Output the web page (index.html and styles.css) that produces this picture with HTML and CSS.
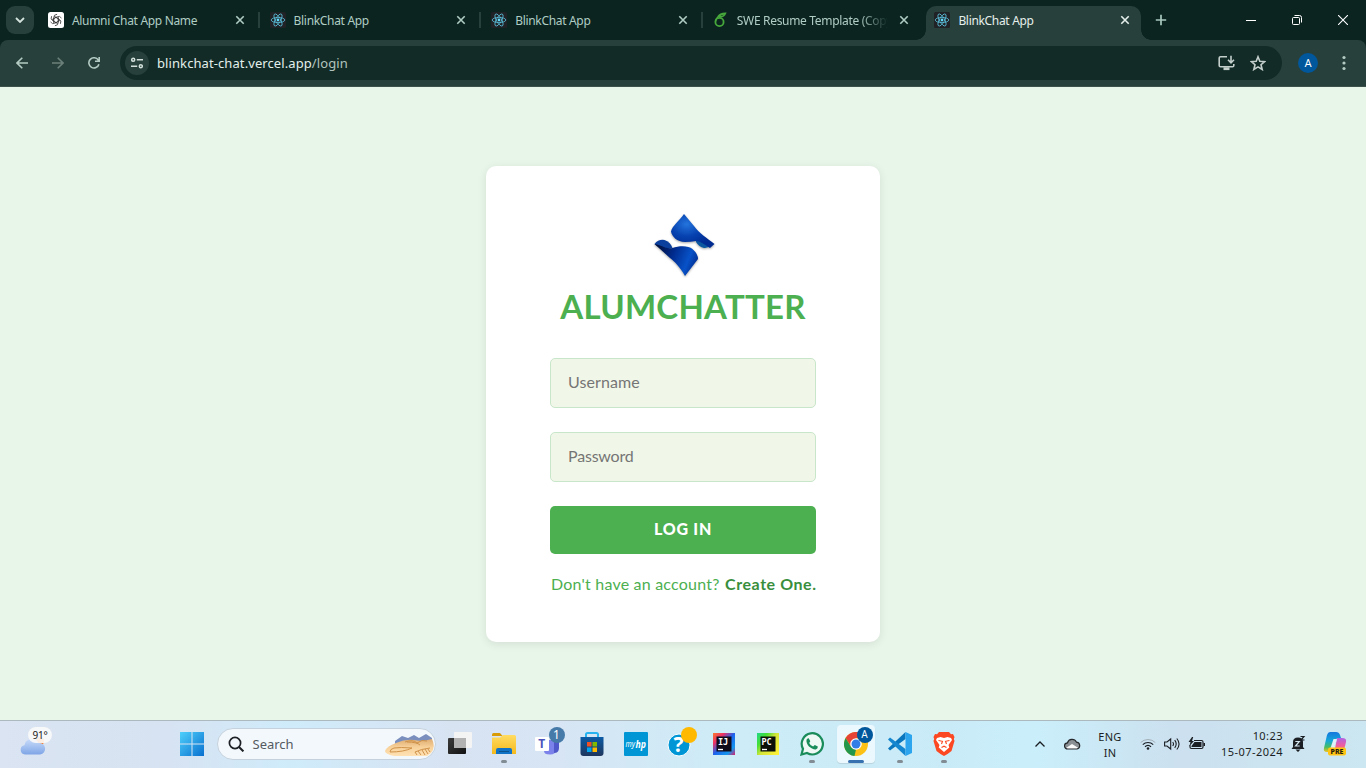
FILE: index.html
```html
<!DOCTYPE html>
<html lang="en">
<head>
<meta charset="utf-8">
<title>BlinkChat App</title>
<link rel="stylesheet" href="styles.css">
</head>
<body>
<svg class="defs" width="0" height="0">
  <defs>
    <symbol id="react" viewBox="0 0 16 16">
      <rect width="16" height="16" rx="1.5" fill="#202225"/>
      <g fill="none" stroke="#58b9d4" stroke-width=".85">
        <ellipse cx="8" cy="8" rx="6.8" ry="2.6"/>
        <ellipse cx="8" cy="8" rx="6.8" ry="2.6" transform="rotate(60 8 8)"/>
        <ellipse cx="8" cy="8" rx="6.8" ry="2.6" transform="rotate(120 8 8)"/>
      </g>
      <circle cx="8" cy="8" r="1.4" fill="#61dafb"/>
    </symbol>
    <symbol id="close" viewBox="0 0 10 10"><path d="M1.3 1.3l7.4 7.4M8.7 1.3L1.3 8.7" fill="none" stroke="currentColor" stroke-width="1.6"/></symbol>
    <linearGradient id="win" gradientUnits="userSpaceOnUse" x1="0" y1="0" x2="24" y2="24"><stop offset="0" stop-color="#4fd0fb"/><stop offset="1" stop-color="#0870cf"/></linearGradient>
    <linearGradient id="cloud" x1="0" y1="0" x2="0" y2="1"><stop offset="0" stop-color="#c8dcfa"/><stop offset="1" stop-color="#7fa5e6"/></linearGradient>
    <linearGradient id="folder" x1="0" y1="0" x2="0" y2="1"><stop offset="0" stop-color="#ffdc62"/><stop offset="1" stop-color="#f5b91c"/></linearGradient>
    <linearGradient id="store" x1="0" y1="0" x2="0" y2="1"><stop offset="0" stop-color="#0b5ba5"/><stop offset="1" stop-color="#1f365c"/></linearGradient>
    <linearGradient id="ij" x1="0" y1="0" x2="1" y2="1"><stop offset="0" stop-color="#fb7b31"/><stop offset=".25" stop-color="#ee3163"/><stop offset=".5" stop-color="#1d62ed"/><stop offset=".8" stop-color="#1597ef"/><stop offset="1" stop-color="#df1c67"/></linearGradient>
    <linearGradient id="pc" x1="0" y1="0" x2="1" y2=".8"><stop offset="0" stop-color="#20d789"/><stop offset=".3" stop-color="#46df35"/><stop offset=".55" stop-color="#d2e53a"/><stop offset="1" stop-color="#fcf039"/></linearGradient>
    <radialGradient id="logoA" cx=".36" cy=".3" r=".65"><stop offset="0" stop-color="#2474dd"/><stop offset=".55" stop-color="#0642b0"/><stop offset="1" stop-color="#002c92"/></radialGradient>
    <linearGradient id="logoB" x1="0" y1=".25" x2="1" y2=".55"><stop offset="0" stop-color="#00103c"/><stop offset=".4" stop-color="#002a8c"/><stop offset=".78" stop-color="#0752c8"/><stop offset="1" stop-color="#022e93"/></linearGradient>
    <linearGradient id="dune" x1="0" y1="0" x2="0" y2="1"><stop offset="0" stop-color="#dfad72"/><stop offset=".5" stop-color="#f8d29b"/><stop offset="1" stop-color="#ffe1b3"/></linearGradient>
    <linearGradient id="copA" x1="0" y1="0" x2="0" y2="1"><stop offset="0" stop-color="#1677df"/><stop offset=".45" stop-color="#15a8d8"/><stop offset=".75" stop-color="#45bd61"/><stop offset="1" stop-color="#f6c31c"/></linearGradient>
    <linearGradient id="copB" x1="0" y1="0" x2="0" y2="1"><stop offset="0" stop-color="#b063e5"/><stop offset=".5" stop-color="#ef5e9c"/><stop offset="1" stop-color="#ff944d"/></linearGradient>
    <linearGradient id="shade" x1="0" y1="0" x2="1" y2="1"><stop offset="0" stop-color="#3b3b3b"/><stop offset="1" stop-color="#111"/></linearGradient>
  </defs>
</svg>

<header class="tabstrip">
  <button class="tab-search"><svg width="10" height="6" viewBox="0 0 10 6"><path d="M1 1l4 4 4-4" fill="none" stroke="#d5e3df" stroke-width="1.8"/></svg></button>
  <div class="tabs">
    <div class="tab">
      <svg class="favicon" viewBox="0 0 16 16"><rect width="16" height="16" rx="2.5" fill="#fff"/><g transform="translate(8 8)" fill="none" stroke="#333" stroke-width=".75"><path id="petal" d="M-2.300 3.200v-4.500l2.800-1.700q3.200-1.900 5 1.100"/><use href="#petal" transform="rotate(60)"/><use href="#petal" transform="rotate(120)"/><use href="#petal" transform="rotate(180)"/><use href="#petal" transform="rotate(240)"/><use href="#petal" transform="rotate(300)"/></g></svg>
      <span class="tab-title">Alumni Chat App Name</span>
      <svg class="close"><use href="#close"/></svg>
    </div>
    <div class="tab">
      <svg class="favicon"><use href="#react"/></svg>
      <span class="tab-title">BlinkChat App</span>
      <svg class="close"><use href="#close"/></svg>
    </div>
    <div class="tab">
      <svg class="favicon"><use href="#react"/></svg>
      <span class="tab-title">BlinkChat App</span>
      <svg class="close"><use href="#close"/></svg>
    </div>
    <div class="tab last">
      <svg class="favicon" viewBox="0 0 16 16" fill="none" stroke="#47a83b"><circle cx="6.500" cy="10" r="4.100" stroke-width="1.800"/><path d="M2.600 9.500C2.800 5.500 6.500 3 12 1.400M5 4.600C6.500 1.700 9 1.200 12.500 1.200 11.500 3.800 9.500 5 6.500 4.800" stroke-width="1.500"/></svg>
      <span class="tab-title fade">SWE Resume Template (Copy</span>
      <svg class="close"><use href="#close"/></svg>
    </div>
    <div class="tab active">
      <svg class="favicon"><use href="#react"/></svg>
      <span class="tab-title">BlinkChat App</span>
      <svg class="close"><use href="#close"/></svg>
    </div>
  </div>
  <svg class="new-tab" width="12" height="12" viewBox="0 0 12 12"><path d="M6 .8v10.400M.8 6h10.400" stroke="#a9c8be" stroke-width="1.7"/></svg>
  <div class="window-controls">
    <span><svg width="10" height="10" viewBox="0 0 10 10"><path d="M0 5.500h10" stroke="#fff"/></svg></span>
    <span><svg width="10" height="10" viewBox="0 0 10 10" fill="none" stroke="#fff"><rect x=".5" y="2.500" width="7" height="7" rx="1"/><path d="M2.500.5H7.500q2 0 2 2v5"/></svg></span>
    <span><svg width="10" height="10" viewBox="0 0 10 10"><path d="M0 0l10 10M10 0L0 10" stroke="#fff" stroke-width="1.100"/></svg></span>
  </div>
</header>

<nav class="toolbar-back">
  <div class="toolbar">
    <div class="nav-buttons">
      <svg width="12" height="12" viewBox="0 0 12 12" fill="none" stroke="#b3cbc3" stroke-width="1.6"><path d="M12 6H1.300M6.300.7L1 6l5.300 5.300"/></svg>
      <svg width="12" height="12" viewBox="0 0 12 12" fill="none" stroke="#6b807a" stroke-width="1.6"><path d="M0 6h10.700M5.700.7L11 6l-5.300 5.300"/></svg>
      <svg width="12" height="12" viewBox="0 0 12 12" fill="none" stroke="#b3cbc3" stroke-width="1.6"><path d="M10.900 7.200A5.100 5.100 0 1 1 10.300 3.200M11.200 0v4.200H7"/></svg>
    </div>
    <div class="omnibox">
      <span class="site-info"><svg width="12" height="12" viewBox="0 0 12 12" fill="none" stroke="#d2dfdb" stroke-width="1.5"><circle cx="2.200" cy="2.800" r="1.500"/><path d="M5.800 2.800H12M0 9.200h6.200"/><circle cx="9.800" cy="9.200" r="1.500"/></svg></span>
      <span class="url">blinkchat-chat.vercel.app<i>/login</i></span>
      <svg class="install" width="17" height="16" viewBox="0 0 17 16" fill="none" stroke="#c4cfcc" stroke-width="1.600"><path d="M9 1.800H2.500q-1.300 0-1.300 1.300v7.400q0 1.300 1.300 1.300h12q1.300 0 1.300-1.300V9M13 .8V7M10 4.800l3 3 3-3"/><path d="M5.500 13.700h6" stroke-width="2.800"/></svg>
      <svg class="star" width="16" height="16" viewBox="0 0 16 16" fill="none" stroke="#c4cfcc" stroke-width="1.600"><path d="M8 1.800l1.800 4.400 4.900.4-3.700 3.100 1.200 4.800L8 11.900l-4.200 2.600L5 9.700 1.300 6.600l4.900-.4z"/></svg>
    </div>
    <span class="avatar">A</span>
    <svg class="menu" width="4" height="16" viewBox="0 0 4 16" fill="#b3cbc3"><circle cx="2" cy="2.500" r="1.600"/><circle cx="2" cy="8" r="1.600"/><circle cx="2" cy="13.500" r="1.600"/></svg>
  </div>
</nav>

<main class="page">
  <form class="card">
    <svg class="logo" width="64" height="66" viewBox="0 0 64 66">
      <path d="M43 28q8 0 16 5-4 3.500-8 3-5-1-8-6z" fill="#0b57a0"/>
      <path d="M31 2C27 8 19 14 18 19.500c1 5 6 10.500 14 10.500q6 0 11-1 4 .3 6.500 2.300L57 36l4.500-4C54 26 46 21 41 14z" fill="url(#logoA)"/>
      <path d="M1.500 32q4-5 10-4 6 2 8 8-10 2-17-3z" fill="#0b3f9e"/>
      <path d="M1.500 32q3 .5 7 2 6 3 11 2c7-2.500 16-2.500 20 1q5.500 5 5.500 10L32 64C27 55 22 50 17 46z" fill="url(#logoB)"/>
    </svg>
    <h1 class="brand">ALUMCHATTER</h1>
    <input class="field" type="text" placeholder="Username">
    <input class="field password" type="password" placeholder="Password">
    <button class="login" type="button">LOG IN</button>
    <p class="signup"><span>Don't have an account?</span><a>Create One.</a></p>
  </form>
</main>

<footer class="taskbar">
  <div class="weather">
    <svg width="27" height="18" viewBox="0 0 27 18"><circle cx="20" cy="4" r="4" fill="#ff7a1c"/><path d="M5 17.500a4.700 4.700 0 0 1-.5-9.300A7.500 7.500 0 0 1 18.500 6a5.800 5.800 0 0 1 1.700 11.500z" fill="url(#cloud)"/></svg>
    <b>91°</b>
  </div>
  <div class="apps">
    <span class="app"><svg width="24" height="24" viewBox="0 0 24 24" fill="url(#win)"><path d="M0 0h11.500v11.500H0zM12.500 0H24v11.500H12.500zM0 12.500h11.500V24H0zM12.500 12.500H24V24H12.500z"/></svg></span>
    <div class="search">
      <svg width="16" height="16" viewBox="0 0 16 16" fill="none" stroke="#1d2126" stroke-width="1.700"><circle cx="7" cy="7" r="5.600"/><path d="M11 11l4.400 4.400" stroke-width="2"/></svg>
      <span>Search</span>
      <svg class="dunes" width="50" height="23" viewBox="0 0 50 23"><path d="M11 8l7-5 6 2 6-3 5 3 7-4 6 4v9H11z" fill="#7a8fbd"/><path d="M1 18Q3 13 12 10q9-4 18-3 9 2 18-1 4 8-1 14l-4 3H10Q1 21 1 18z" fill="url(#dune)"/><path d="M6 19q14 0 22-4-12-1-18 0-4 1-4 4m15-10q8-3 12 1 5-4 10-2M31 19q6-3 15-4M31 19l2 3m1-4l3 4m1-5l3 5m0-6l3 5m0-5l2 3M23 9q10 0 13 3" fill="none" stroke="#cf924a" stroke-width="1"/></svg>
    </div>
    <span class="app"><svg width="26" height="24" viewBox="0 0 26 24"><rect x="1" y="6" width="18" height="16" rx="1" fill="url(#shade)"/><rect x="7" y="0" width="18" height="16" rx="1" fill="#f4f4f4"/><path d="M7 6h12v10H7z" fill="#b2b2b2"/></svg></span>
    <span class="app running"><svg width="24" height="22" viewBox="0 0 24 22"><path d="M0 1.500Q0 0 1.500 0H8l2.500 3H0z" fill="#d99a08"/><path d="M0 4.500h8L11 2h11.500Q24 2 24 3.500V21H0z" fill="url(#folder)"/><path d="M4 21v-4q0-2 2-2h12q2 0 2 2v4z" fill="#1173c6"/><path d="M7 18.500h10" stroke="#0c538e"/></svg></span>
    <span class="app"><svg width="28" height="24" viewBox="0 0 28 24"><circle cx="22" cy="6" r="3.500" fill="#5059c9"/><path d="M12 8h10v9q0 5.500-6 5.500T10 19z" fill="#7b83eb"/><path d="M20 8h5v8q0 5-5 5z" fill="#5059c9"/><rect x="1" y="5" width="14" height="14" rx="1" fill="#fff"/><text x="4.200" y="16.400" class="glyph teams">T</text></svg><em class="badge count">1</em></span>
    <span class="app"><svg width="24" height="24" viewBox="0 0 24 24"><path d="M6 5V2.500Q6 1 7.500 1h9Q18 1 18 2.500V5" fill="none" stroke="#27b3ef" stroke-width="2"/><path d="M.5 5h23v16q0 3-3 3h-17q-3 0-3-3z" fill="url(#store)"/><path d="M7 10h4.500v4.500H7z" fill="#f25022"/><path d="M12.500 10H17v4.500h-4.500z" fill="#7fba00"/><path d="M7 15.500h4.500V20H7z" fill="#00a4ef"/><path d="M12.500 15.500H17V20h-4.500z" fill="#ffb900"/></svg></span>
    <span class="app"><svg width="24" height="24" viewBox="0 0 24 24"><rect width="24" height="24" rx="1" fill="#0096d6"/><text x="1.500" y="15" class="glyph my" textLength="9.500" lengthAdjust="spacingAndGlyphs">my</text><text x="11.500" y="15.500" class="glyph hp" textLength="10.500" lengthAdjust="spacingAndGlyphs">hp</text></svg></span>
    <span class="app"><svg width="28" height="26" viewBox="0 0 28 26"><circle cx="13" cy="14" r="11" fill="#0096d6" stroke="#fff"/><text x="7.500" y="21" class="glyph help">?</text></svg><em class="badge amber"></em></span>
    <span class="app"><svg width="22" height="22" viewBox="0 0 22 22"><rect width="22" height="22" fill="url(#ij)"/><path d="M3.500 3.500h15v15h-15z" fill="#100b1a"/><text x="5" y="11.500" class="glyph code">IJ</text><path d="M5 16.500h5" stroke="#fff" stroke-width="1.300"/></svg></span>
    <span class="app"><svg width="22" height="22" viewBox="0 0 22 22"><rect width="22" height="22" fill="url(#pc)"/><path d="M3.500 3.500h15v15h-15z" fill="#0b1108"/><text x="4.500" y="11.500" class="glyph code">PC</text><path d="M5 16.500h5" stroke="#fff" stroke-width="1.300"/></svg></span>
    <span class="app running"><svg width="24" height="24" viewBox="0 0 24 24"><path d="M1.500 22.500l1.500-5.600A10.600 10.600 0 1 1 7 21z" fill="#eef9f5" stroke="#1a8c5b" stroke-width="2.200"/><path d="M8.700 6.300q-1.400-.4-2.200 1.500c-.8 5 4.600 9.800 9.300 9.600q2.400-1 2-3l-3-1.500-1.700 1.700q-2.700-1-3.900-3.700l1.100-1.600z" fill="#1a8c5b"/></svg></span>
    <span class="app running current"><svg width="24" height="24" viewBox="0 0 24 24"><circle cx="12" cy="12" r="12" fill="#fbc116"/><path d="M1.600 6A12 12 0 0 1 22.400 6H12l-4.500 9z" fill="#e44336"/><path d="M1.600 6l5.500 9 4.900 2.500L10.500 24A12 12 0 0 1 1.600 6z" fill="#23964b"/><circle cx="12" cy="12" r="5.800" fill="#fff"/><circle cx="12" cy="12" r="4.500" fill="#337de7"/></svg><em class="badge profile">A</em></span>
    <span class="app running"><svg width="24" height="24" viewBox="0 0 24 24"><path d="M2 18.500l-2-2L17.500 0v7z" fill="#0a76bd"/><path d="M2 5.500l-2 2L17.500 24v-7z" fill="#1586d0"/><path d="M17.500 0L24 3v18l-6.500 3z" fill="#2ca4ee"/></svg></span>
    <span class="app running"><svg width="22" height="24" viewBox="0 0 22 24"><path d="M6 0h10l2 2.300 2-.2L21.500 5l-.7 2 .7 2-3 10Q15 22 11 24 7 22 3.500 19L.5 9l.7-2-.7-2L2 2.100l2 .2z" fill="#fb4823"/><path d="M4 6l3.500-1L11 6l3.500-1L18 6l1 2-3.500 5 .8 2.400L11 20l-5.300-4.600.8-2.400L3 8z" fill="#fff"/><path d="M5.500 8.500l4 .8-1 2.700M16.500 8.500l-4 .8 1 2.700M8.500 15.500l2.500-1.300 2.500 1.300" fill="none" stroke="#fb4823" stroke-width="1.100"/></svg></span>
  </div>
  <div class="tray">
    <span class="chev"><svg width="10" height="6" viewBox="0 0 10 6"><path d="M.5 5.500L5 1l4.500 4.500" fill="none" stroke="#1b1f24" stroke-width="1.300"/></svg></span>
    <span class="onedrive"><svg width="17" height="12" viewBox="0 0 17 12"><path d="M3.800 11a3.100 3.100 0 0 1-.3-6.200 4.800 4.800 0 0 1 8.900-.7A3.500 3.500 0 0 1 13 11z" fill="#8b9094"/><path d="M2 10l6-4 6.500 4q-.7 1-1.500 1H3.800z" fill="#fafafa"/><path d="M3.800 11a3.100 3.100 0 0 1-.3-6.200 4.800 4.800 0 0 1 8.900-.7A3.500 3.500 0 0 1 13 11z" fill="none" stroke="#25292c" stroke-width="1.200"/></svg></span>
    <span class="lang">ENG<br>IN</span>
    <span class="wifi"><svg width="16" height="12" viewBox="0 0 16 12" fill="none" stroke="#1b1f24"><path d="M.7 4.500a10.500 10.500 0 0 1 14.600 0" stroke="#a1adb5"/><path d="M2.800 6.600a7.500 7.500 0 0 1 10.400 0M5 8.800a4.400 4.400 0 0 1 6 0" stroke-width="1.200"/><circle cx="8" cy="10.500" r="1.300" fill="#1b1f24" stroke="none"/></svg></span>
    <span class="sound"><svg width="16" height="14" viewBox="0 0 16 14" fill="none" stroke="#1b1f24" stroke-width="1.100"><path d="M.6 5v4H3l3.700 3V2L3 5zM8.700 5q1.600 2 0 4M10.700 3.200q3 3.800 0 7.600M12.800 1.500q4.500 5.500 0 11"/></svg></span>
    <span class="battery"><svg width="17" height="14" viewBox="0 0 17 14"><path d="M6 3.500h7.500q1.500 0 1.500 1.500v5q0 1.500-1.500 1.500h-10Q2 11.500 2 10V8" fill="none" stroke="#1b1f24" stroke-width="1.200"/><path d="M6.500 5h7v5h-10V9z" fill="#1b1f24"/><path d="M4 0L.5 5h2l-1 4L6 4H4l1.200-4zM15.500 6H17v3h-1.500z" fill="#1b1f24"/></svg></span>
    <span class="clock">10:23<br>15-07-2024</span>
    <span class="bell"><svg width="16" height="18" viewBox="0 0 16 18"><path d="M3 12V7q0-4.500 5-4.500t5 4.500v5l1.500 2h-13zM5.500 14.500h5L8 17z" fill="#1b1f24"/><path d="M5.300 6.500h4L5.500 11h4.200" stroke="#d3e6f0" stroke-width="1.200" fill="none"/><path d="M10.500 1.500H14L11 5h3.500" stroke="#1b1f24" stroke-width="1.200" fill="none"/></svg></span>
    <span class="copilot"><svg width="24" height="24" viewBox="0 0 24 24"><path d="M7 0h6q3 0 4 3l1 3h-4l-4 11q-1 3-4 3H4q-4 0-3-4L4 3q1-3 3-3z" fill="url(#copA)"/><path d="M14 6h5q5 0 4 4l-2 8q-1 3-4 3H8q3-1 4-4z" fill="url(#copB)"/><path d="M10.500 7H14l-3 9H7.500z" fill="#dff0f7"/><rect x="5" y="15.500" width="18" height="8" rx="2" fill="#ffc414"/><text x="7.500" y="22" class="glyph pre" textLength="13">PRE</text></svg></span>
  </div>
</footer>
</body>
</html>
```
FILE: styles.css
```css
* { box-sizing: border-box; }
body {
  margin: 0;
  width: 1366px;
  height: 768px;
  overflow: hidden;
  display: flex;
  flex-direction: column;
  font-family: "Noto Sans", sans-serif;
  background: #e8f5e9;
}
.defs { position: absolute; }
svg { display: block; flex: none; }
button { border: 0; padding: 0; }

/* Tabs */
.tabstrip { flex: none; height: 40px; display: flex; background: #0b2420; }
.tab-search {
  width: 28px; height: 28px; margin: 6px;
  border-radius: 9px; background: #28403b;
  display: flex; align-items: center; justify-content: center;
}
.tabs { display: flex; padding-top: 6px; }
.tab {
  position: relative;
  width: 221.600px; height: 34px; padding: 0 15px 6px 8px;
  display: flex; align-items: center; gap: 8px;
  color: #b0cdc4; font-size: 12px; letter-spacing: -.32px;
}
.tab:not(.active):not(.last)::after {
  content: ""; position: absolute; right: 2px; top: 6px;
  width: 2px; height: 16px; background: #28403b;
}
.favicon { width: 16px; height: 16px; }
.tab-title { flex: 1; min-width: 0; white-space: nowrap; }
.fade {
  -webkit-mask-image: linear-gradient(90deg, #000 122px, transparent 151px);
  mask-image: linear-gradient(90deg, #000 122px, transparent 151px);
}
.close { width: 10px; height: 10px; margin-right: 2px; }
.active {
  width: 215px; padding-right: 9px;
  border-radius: 10px 10px 0 0; background: #28403b; color: #e5efec;
}
.active::before, .active::after {
  content: ""; position: absolute; bottom: 0; width: 10px; height: 10px;
}
.active::before { left: -10px; background: radial-gradient(circle at 0 0, transparent 9.500px, #28403b 10px); }
.active::after { right: -10px; background: radial-gradient(circle at 100% 0, transparent 9.500px, #28403b 10px); }
.new-tab { margin: 14px 0 0 14px; }
.window-controls { margin-left: auto; display: flex; }
.window-controls span { width: 46px; display: flex; align-items: center; justify-content: center; }

/* Address bar */
.toolbar-back { flex: none; background: #0b2420; }
.toolbar {
  height: 47px; padding: 0 20px 1px 16px;
  display: flex; align-items: center;
  background: #28403b; border-radius: 8px 8px 0 0; border-bottom: 1px solid #3c514c;
}
.nav-buttons { width: 104px; display: flex; gap: 24px; }
.omnibox {
  width: 1162px; height: 34px; padding: 0 16px 0 5px;
  display: flex; align-items: center;
  border-radius: 17px; background: #122b27;
}
.site-info {
  width: 24px; height: 24px; border-radius: 50%; background: #28403b;
  display: flex; align-items: center; justify-content: center;
}
.url { margin-left: 8px; font-size: 13px; color: #e3efeb; letter-spacing: .09px; }
.url i { font-style: normal; color: #b3c3be; }
.install { margin-left: auto; }
.star { margin-left: 15px; }
.avatar {
  width: 20px; height: 20px; margin-left: 16px; border-radius: 50%;
  background: #01579b; color: #fff; font: 11px/21px Roboto, sans-serif; text-align: center;
}
.menu { margin-left: 24px; }

/* Sign-in form */
.page { flex: 1; display: flex; align-items: flex-start; justify-content: center; padding-top: 79px; }
.card {
  width: 394px; height: 476px; padding: 46px 64px 0;
  display: flex; flex-direction: column;
  background: #fff; border-radius: 10px;
  box-shadow: 0 2px 10px rgba(0, 0, 0, .09);
  font-family: Lato, sans-serif;
}
.logo { align-self: center; margin-left: 3px; filter: drop-shadow(0 1px 1px rgba(0, 0, 0, .35)); }
.brand {
  margin: 8px -20px 32px; height: 40px;
  font-size: 33px; line-height: 40px; font-weight: 700; letter-spacing: .25px;
  text-align: center; color: #4caf50;
}
.field {
  flex: none; width: 266px; height: 50px; margin-bottom: 24px; padding: 0 17px 4px;
  border: 1px solid #c8e6c9; border-radius: 5px; background: #f1f7e8;
  font: 16px Lato, sans-serif; letter-spacing: .1px;
}
.password { letter-spacing: -.2px; }
.field::placeholder { color: #757575; }
.login {
  height: 48px; padding-bottom: 4px; border-radius: 5px;
  background: #4caf50; color: #fff;
  font: 900 16px Lato, sans-serif; letter-spacing: .75px;
}
.signup {
  margin: 19px 0 0 1px; display: flex; justify-content: space-between; white-space: nowrap;
  font-size: 16px; line-height: 22px; letter-spacing: .21px; color: #4caf50;
}
.signup a { color: #388e3c; font-weight: 700; letter-spacing: .55px; margin-right: -.5px; }

/* Taskbar */
.taskbar {
  flex: none; height: 48px; display: flex; border-top: 1px solid #acb9bf;
  background: linear-gradient(90deg, #dae4f2 0, #d7e3f2 170px, #cfebfa 290px, #d8e3f2 450px, #d7e5f4 560px, #cdecf7 730px, #c9ebf7 950px, #caeffb 1030px, #cce0ef 1180px, #cce7f1 1366px);
}
.weather { position: relative; width: 169.500px; padding: 16px 0 0 20px; }
.weather b {
  position: absolute; left: 28px; top: 6px; width: 24px; height: 16px; border-radius: 8px;
  background: rgba(250, 250, 250, .9); color: #202020;
  font-size: 10px; line-height: 16px; font-weight: 400; text-align: center; letter-spacing: -.3px;
}
.apps { display: flex; height: 46px; align-items: center; }
.app { position: relative; width: 44px; height: 46px; display: flex; align-items: center; justify-content: center; }
.search {
  width: 219px; height: 32px; margin: 0 2px 0 3px; padding: 0 1px 0 10px;
  display: flex; align-items: center; gap: 9px;
  border-radius: 16px; background: #f3f8fd; border: 1px solid #c5d2dd;
  color: #555b61; font-size: 13px;
}
.dunes { margin-left: auto; }
.running::after {
  content: ""; position: absolute; bottom: 4px; left: 19px;
  width: 6px; height: 3px; border-radius: 2px; background: #828c94;
}
.current::before {
  content: ""; position: absolute; left: 3px; top: 4px; width: 38px; height: 38px;
  border-radius: 4px; background: #ebf8fd; box-shadow: 0 1px 1px rgba(0, 0, 0, .1);
}
.current svg { position: relative; }
.current::after { left: 14px; width: 16px; background: #3771af; }
.badge {
  position: absolute; left: 23px; top: 6px; width: 16px; height: 16px; border-radius: 50%;
  font: 12px/16px "Noto Sans", sans-serif; text-align: center; color: #fff;
}
.count { background: #467aa8; }
.amber { background: #ffb900; }
.profile { background: #01579b; font: 10px/16px Roboto, sans-serif; }
.glyph { font-family: "Noto Sans", sans-serif; fill: #fff; }
.teams { font-size: 12px; font-weight: 700; fill: #4b53bc; }
.my { font-size: 8px; font-style: italic; }
.hp { font-size: 10.500px; font-weight: 700; font-style: italic; }
.help { font-size: 21px; font-weight: 700; }
.code { font: 700 8.500px "DejaVu Sans Mono", monospace; }
.pre { font-size: 7px; font-weight: 800; fill: #26200b; }
.tray { margin-left: auto; padding-right: 9px; display: flex; color: #1b1f24; font-size: 11px; line-height: 16px; }
.tray span { height: 46px; display: flex; align-items: center; justify-content: center; }
.chev, .onedrive, .wifi, .battery { width: 32px; }
.sound { width: 16px; }
.tray .lang, .tray .clock { display: block; padding-top: 8px; text-align: center; }
.lang { width: 44px; }
.lang, .clock { letter-spacing: .3px; }
.tray .clock { width: 71px; text-align: right; white-space: nowrap; padding-top: 7px; letter-spacing: .45px; }
.bell { width: 30px; }
.copilot { width: 44px; }
```
